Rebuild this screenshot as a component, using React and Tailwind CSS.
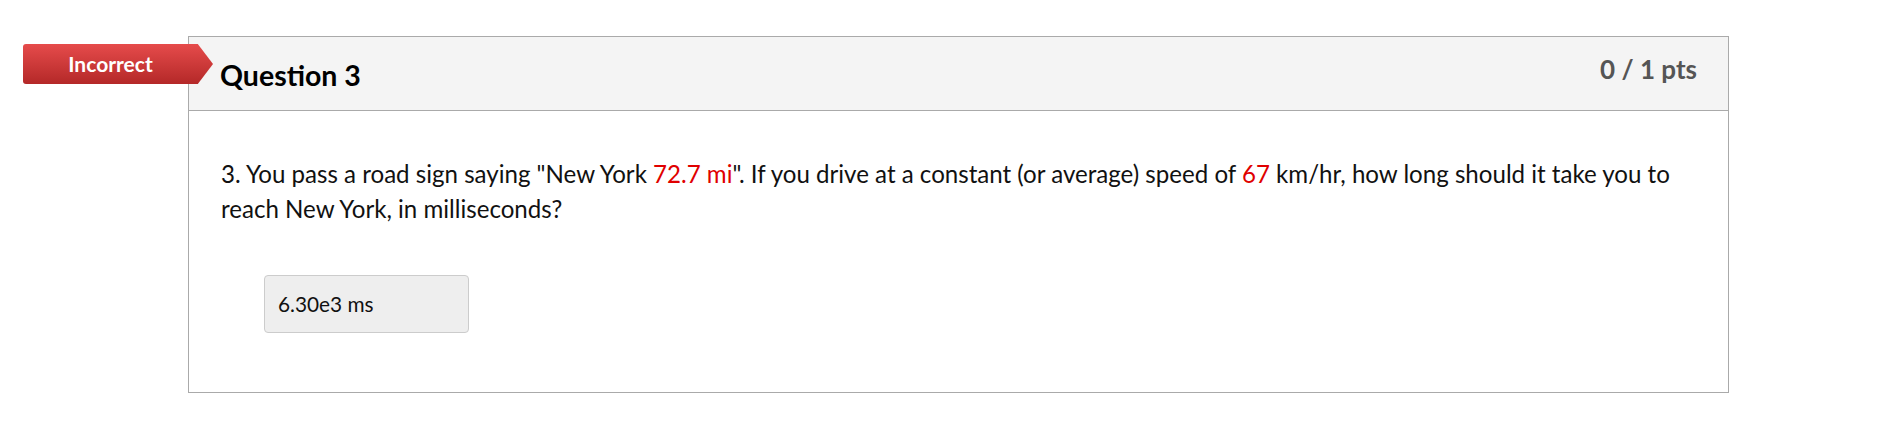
export default function App() {
  return (
    <div className="min-h-[427px] bg-white pt-[36px] pl-[188px] font-['Lato','Liberation_Sans',sans-serif] text-[#111]">
      <div className="relative w-[1541px] border border-[#aaaaaa]">
        {/* result badge */}
        <div className="absolute left-[-166px] top-[7px] flex h-[40px] w-[190px] items-center justify-center rounded-l-[3px] bg-linear-to-b from-[#e64b4b] to-[#b42828] pr-[15px] text-[21px] font-bold text-white [clip-path:polygon(0_0,92%_0,100%_50%,92%_100%,0_100%)]">
          Incorrect
        </div>

        <div className="flex h-[74px] justify-between border-b border-[#aaaaaa] bg-[#f4f4f4] pl-[31px] pr-[31px]">
          <h2 className="pt-[21px] text-[28.5px] font-bold leading-[34px] text-black">Question 3</h2>
          <div className="pt-[15px] text-[26px] font-bold leading-[34px] text-[#555]">0 / 1 pts</div>
        </div>

        <div className="px-[32px] pt-[45px] pb-[59px]">
          <p className="text-[24.1px] leading-[35px]">
            3. You pass a road sign saying "New York <span className="text-[#e00000]">72.7 mi</span>". If you drive at a
            constant (or average) speed of <span className="text-[#e00000]">67</span> km/hr, how long should it take you
            to reach New York, in milliseconds?
          </p>
          <div className="mt-[49px] ml-[43px] flex h-[58px] w-[205px] items-center rounded-[4px] border border-[#cccccc] bg-[#eeeeee] px-[13px] text-[20.8px]">
            6.30e3 ms
          </div>
        </div>
      </div>
    </div>
  );
}
